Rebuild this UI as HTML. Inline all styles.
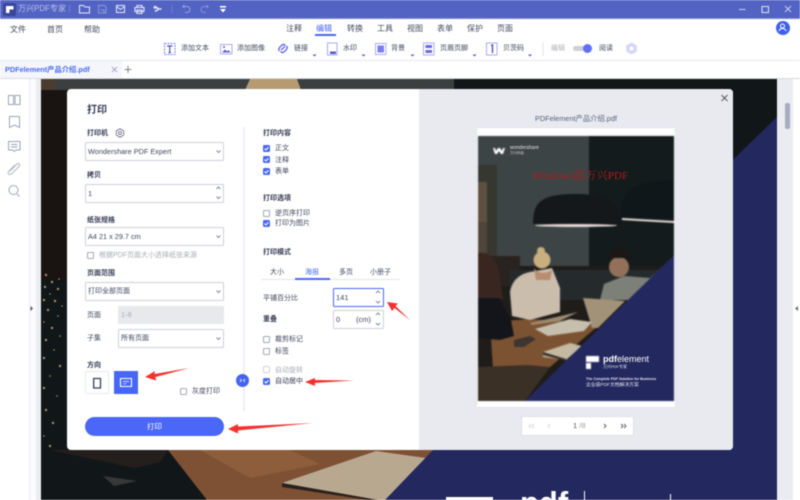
<!DOCTYPE html>
<html lang="zh"><head><meta charset="utf-8"><title>万兴PDF专家</title>
<style>
html,body{margin:0;padding:0;width:800px;height:500px;overflow:hidden;background:#fff}
#r{position:relative;width:800px;height:500px;overflow:hidden;font-family:"Liberation Sans","Noto Sans CJK SC",sans-serif;color:#41465c;filter:blur(.4px)}
#r div,#r svg{position:absolute}
.t{position:absolute;white-space:nowrap;line-height:10px;font-size:7px}
.m{font-size:8px;color:#444a5e}
.b{font-weight:700;color:#353b52}
.g{color:#a9acb6}
.box{background:#fff;border:1px solid #cfd0dc;border-radius:1.5px;box-sizing:border-box}
.c{width:7px;height:7px;border:1px solid #a5a7b3;border-radius:1.5px;box-sizing:border-box;background:#fff}
.k{width:7px;height:7px;border-radius:1.5px;background:#4766f5}
</style></head><body><div id="r">

<!-- title bar -->
<div style="left:0;top:0;width:800px;height:18px;background:#5363c4"></div>
<div style="left:0;top:18px;width:800px;height:1px;background:#7c89d6"></div>
<div style="left:3px;top:3px;width:13px;height:13px;background:#3a4799;border-radius:2px"></div>
<svg style="left:0;top:0" width="800" height="19" viewBox="0 0 800 19" fill="none" stroke="#e6e9f8" stroke-width="1">
<path d="M6 6h7.500v3.500h-4v3.500h-3.500z" fill="#fff" stroke="none"/>
<path d="M69.500 5v8" stroke="#6f7dd0"/>
<path d="M79.500 5.500h4l1.500 1.500h4.500v6h-10z"/>
<path d="M98.500 5.500h6l1.500 1.500v6h-7.500zM100.500 10h3.500v3" opacity=".4"/>
<path d="M116.500 5.500h8v7h-8zM116.500 6.500l4 3 4-3"/>
<path d="M137 7V5.500h5V7M135 7.500h9v4h-9zM137 10h5v3.500h-5z" stroke-width="1.100"/>
<path d="M155 6.500l4 2.500-4 2.500M155 6.500a.8.800 0 1 0 .1 0M160 9h1.500" stroke-width="1.500"/>
<path d="M172 5v8" stroke="#6f7dd0"/>
<path d="M183 6.500h4a3 3 0 0 1 0 6h-2M184.500 5l-1.700 1.500 1.700 1.500" opacity=".45"/>
<path d="M208 6.500h-4a3 3 0 0 0 0 6h2M206.500 5l1.700 1.500-1.700 1.500" opacity=".35"/>
<path d="M220 6h6v1.500h-6z" fill="#fff" stroke="none"/><path d="M220 9h6l-3 3.500z" fill="#fff" stroke="none"/>
<path d="M739 9.500h6.500" stroke="#c9cfee"/>
<path d="M762 6.500h6.500v6h-6.500z" stroke="#dfe3f6"/>
<path d="M785 6l6 6M791 6l-6 6" stroke="#c9cfee"/>
</svg>
<div class="t" style="left:18px;top:4px;font-size:8px;color:#bcc3ea">万兴PDF专家</div>

<!-- menu -->
<div class="t m" style="left:10px;top:25px">文件</div>
<div class="t m" style="left:47px;top:25px">首页</div>
<div class="t m" style="left:84px;top:25px">帮助</div>
<div class="t m" style="left:286px;top:24px">注释</div>
<div class="t m" style="left:316px;top:24px;color:#4766f5">编辑</div>
<div style="left:315px;top:34px;width:21px;height:1.500px;background:#4766f5"></div>
<div class="t m" style="left:347px;top:24px">转换</div>
<div class="t m" style="left:377px;top:24px">工具</div>
<div class="t m" style="left:407px;top:24px">视图</div>
<div class="t m" style="left:437px;top:24px">表单</div>
<div class="t m" style="left:467px;top:24px">保护</div>
<div class="t m" style="left:497px;top:24px">页面</div>
<div style="left:775.500px;top:20.500px;width:14px;height:14px;border-radius:50%;background:#3d60f0"></div>
<svg style="left:775px;top:20px" width="15" height="15" fill="none" stroke="#fff" stroke-width="1"><circle cx="7.500" cy="6" r="2"/><path d="M4 11c.5-2 2-2.500 3.500-2.500S10.500 9 11 11"/></svg>

<!-- toolbar -->
<svg style="left:0;top:40px" width="800" height="20" fill="none" stroke="#7c7ff0" stroke-width="1">
<path d="M164.500 3.500h10.500v11h-10.500z" stroke-dasharray="2 1"/>
<path d="M167 6h5.500M169.700 6v6.500M168.500 12.500h2.500" stroke="#5358b0" stroke-width="1.200"/>
<path d="M220.500 4.500h11.500v9.500h-11.500z" stroke="#a9aaf5"/>
<path d="M222 12.500l3-3 2 2 1.500-1.500 2 2.500z" fill="#5558c8" stroke="none"/><circle cx="224" cy="7" r="1" fill="#5558c8" stroke="none"/>
<path d="M279.500 11c-2-2 .5-4 2-5.500 1.500-1.500 3-1 4 0M286.500 6c2 2-.5 4-2 5.500-1.500 1.500-3 1-4 0M281 10l4-3.500" stroke="#5f63ea" stroke-width="1.300"/>
<path d="M327.500 3h9.500v12h-9.500z" stroke="#a9aaf5"/><path d="M330 11.500h6v2.500h-6z" fill="#5558c8" stroke="none"/>
<path d="M375.500 3.500h10.500v11h-10.500z" stroke="#a9aaf5"/><path d="M377.500 5.500h6.500v7h-6.500z" fill="#7a7cf2" stroke="none"/>
<path d="M423.500 3h10.500v12h-10.500z" stroke="#a9aaf5"/><path d="M425.500 5h6.500v3h-6.500zM425.500 10h6.500v3h-6.500z" fill="#6a6de0" stroke="none"/>
<path d="M486.500 3h10.500v12h-10.500z" stroke="#a9aaf5"/><path d="M491 5.500l1.500-.5v8" stroke="#4c50c0" stroke-width="1.400"/>
<path d="M312.500 14.500h4l-2 2z M361.500 14.500h4l-2 2zM410.500 14.500h4l-2 2zM472.500 14.500h4l-2 2zM528 14.500h4l-2 2z" fill="#5558c8" stroke="none"/>
<path d="M543 2v14" stroke="#e3e4ea"/>
</svg>
<div class="t" style="left:181px;top:44px">添加文本</div>
<div class="t" style="left:237px;top:44px">添加图像</div>
<div class="t" style="left:294px;top:44px">链接</div>
<div class="t" style="left:343px;top:44px">水印</div>
<div class="t" style="left:391px;top:44px">背景</div>
<div class="t" style="left:440px;top:44px">页眉页脚</div>
<div class="t" style="left:503px;top:44px">贝茨码</div>
<div class="t" style="left:551px;top:44px;color:#b0b2ba">编辑</div>
<div style="left:573px;top:46px;width:14px;height:5px;border-radius:3px;background:#cfd0d6"></div>
<div style="left:582.500px;top:44px;width:9px;height:9px;border-radius:50%;background:#5f70f5"></div>
<div class="t" style="left:599px;top:44px">阅读</div>
<svg style="left:625px;top:42px" width="13" height="13"><path d="M6.500.5l5.300 3v6l-5.300 3-5.300-3v-6z" fill="#d5d6fa"/><circle cx="6.500" cy="6.500" r="2" fill="#fff"/></svg>
<div style="left:0;top:60px;width:800px;height:1px;background:#e6e7ec"></div>

<!-- tabs -->
<div style="left:0;top:61px;width:122px;height:17px;background:#f5f6fb"></div>
<div class="t" style="left:5px;top:65px;font-size:7.300px;font-weight:700;color:#4a6cf0">PDFelement产品介绍.pdf</div>
<svg style="left:110px;top:63px" width="26" height="13" fill="none" stroke="#8a93bb" stroke-width=".8"><path d="M2 4l5 5M7 4l-5 5"/><path d="M18 3v7M14.500 6.500h7" stroke="#666"/></svg>
<div style="left:0;top:78px;width:800px;height:1px;background:#d9dae0"></div>

<!-- sidebar -->
<div style="left:0;top:79px;width:29px;height:421px;background:#fff"></div>
<div style="left:29px;top:79px;width:1px;height:421px;background:#e9eaef"></div>
<div style="left:30px;top:79px;width:6px;height:421px;background:#fcfcfe"></div>
<div style="left:36px;top:79px;width:5px;height:421px;background:#ecedf2"></div>
<svg style="left:0;top:79px" width="40" height="240" fill="none" stroke="#9ea3b5" stroke-width="1">
<path d="M8.500 16.500h5v9h-5zM15 16.500h5v9h-5z"/>
<path d="M9.500 37.500h10v11l-5-2.500-5 2.500z"/>
<path d="M8.500 62.500h11.500v8.500h-4l-1.700 1.500-1.700-1.500h-4zM11 65.500h6.500M11 68h6.500"/>
<path d="M10 92c3-3 5-5 7-7 2-1.500 3.500 1 2 2.500l-7 7c-3 2.500-5-.5-3-2.500l6-6" stroke="#b0b4c3"/>
<circle cx="13.500" cy="111" r="4.500"/><path d="M17 115l2.500 2.500"/>
<path d="M30.500 227v5l2.500-2.500z" fill="#555" stroke="none"/>
</svg>

<!-- document background -->
<svg style="left:41px;top:79px" width="736" height="421" viewBox="41 79 736 421">
<rect x="41" y="79" width="736" height="421" fill="#111719"/>
<rect x="41" y="79" width="413" height="11" fill="#3b3f3f"/>
<rect x="41" y="79" width="14" height="11" fill="#4a3d30"/>
<path d="M250 79h47l4 11h-56z" fill="#b69a72"/>
<rect x="41" y="90" width="30" height="190" fill="#191411"/>
<g fill="#a88e68">
<circle cx="46" cy="275" r="1.200"/><circle cx="52" cy="282" r="1.200"/><circle cx="59" cy="279" r=".8"/><circle cx="45" cy="287" r="1.200"/><circle cx="58" cy="289" r="1.200"/><circle cx="50" cy="294" r=".8"/><circle cx="44" cy="300" r="1.200"/><circle cx="55" cy="301" r="1.200"/><circle cx="62" cy="306" r=".8"/><circle cx="48" cy="310" r="1.200"/><circle cx="58" cy="316" r=".8"/><circle cx="44" cy="322" r=".8"/><circle cx="52" cy="328" r="1.200"/><circle cx="60" cy="336" r=".8"/><circle cx="46" cy="340" r="1.200"/><circle cx="54" cy="350" r=".8"/><circle cx="44" cy="358" r="1.200"/><circle cx="60" cy="366" r="1.200"/><circle cx="50" cy="376" r=".8"/><circle cx="44" cy="388" r="1.200"/><circle cx="57" cy="396" r=".8"/><circle cx="46" cy="410" r="1.200"/><circle cx="53" cy="423" r="1.200"/><circle cx="44" cy="436" r=".8"/><circle cx="50" cy="446" r="1.200"/>
</g>
<path d="M168 450h270l-48 50h-183z" fill="#7f5134"/>
<path d="M200 450h90l30 14-70 14z" fill="#94623f" opacity=".7"/>
<path d="M50 450h118l-8 12-25 6z" fill="#241f1c"/>
<path d="M103 476l34 5-23 5z" fill="#383838"/>
<path d="M282 483l94-32 57 8-41 41h-14z" fill="#b9a890"/>
<path d="M282 483l96 17h-10l-86-13z" fill="#28221d"/>
<path d="M777 117v383h-392l48-50z" fill="#23285f"/>
<rect x="446" y="497" width="47" height="5" fill="#fff"/>
<rect x="584" y="491" width="1" height="10" fill="#fff"/>
<rect x="670" y="494" width="1" height="7" fill="#fff"/>
</svg>
<div class="t" style="left:520px;top:486px;font-size:31px;line-height:34px;color:#fff;font-weight:700">pdf</div>

<!-- scroll area -->
<div style="left:777px;top:79px;width:16px;height:421px;background:#ebecf1"></div>
<div style="left:793px;top:79px;width:7px;height:421px;background:#fff"></div>
<div style="left:785px;top:103px;width:5px;height:26px;border-radius:2px;background:#a8acc0"></div>
<svg style="left:793px;top:304px" width="7" height="10"><path d="M5 2v5L2 4.500z" fill="#666b7c"/></svg>

<!-- modal -->
<div style="left:67px;top:89px;width:666px;height:361px;background:#fff;border-radius:4px;overflow:hidden"></div>
<div style="left:419px;top:89px;width:314px;height:361px;background:#e9eaf0;border-radius:0 4px 4px 0"></div>
<div class="t b" style="left:87px;top:105px;font-size:10px;line-height:12px">打印</div>

<div class="t b" style="left:87px;top:129px">打印机</div>
<svg style="left:115px;top:128px" width="10" height="10" fill="none" stroke="#6c7186" stroke-width=".9"><path d="M5 .8l3.700 2.100v4.200L5 9.200 1.300 7.100V2.900z"/><circle cx="5" cy="5" r="1.400"/></svg>
<div class="box" style="left:85px;top:142px;width:139px;height:19px"></div>
<div class="t" style="left:88px;top:147px;font-size:7.300px">Wondershare PDF Expert</div>

<div class="t b" style="left:87px;top:171px">拷贝</div>
<div class="box" style="left:85px;top:184px;width:139px;height:19px"></div>
<div class="t" style="left:88px;top:189px;font-size:7.500px">1</div>

<div class="t b" style="left:87px;top:216px">纸张规格</div>
<div class="box" style="left:85px;top:227px;width:139px;height:19px"></div>
<div class="t" style="left:88px;top:232px;font-size:7.300px">A4 21 x 29.7 cm</div>
<div class="c" style="left:87px;top:252px"></div>
<div class="t g" style="left:99px;top:251px">根据PDF页面大小选择纸张来源</div>

<div class="t b" style="left:87px;top:269px">页面范围</div>
<div class="box" style="left:85px;top:282px;width:139px;height:19px"></div>
<div class="t" style="left:88px;top:287px">打印全部页面</div>
<div class="t" style="left:87px;top:311px">页面</div>
<div style="left:118px;top:306px;width:106px;height:18px;background:#e8e9ec"></div>
<div class="t g" style="left:121px;top:310px;font-size:7.500px">1-8</div>
<div class="t" style="left:87px;top:334px">子集</div>
<div class="box" style="left:118px;top:329px;width:106px;height:18.500px"></div>
<div class="t" style="left:121px;top:334px">所有页面</div>

<div class="t b" style="left:87px;top:361px">方向</div>
<div class="box" style="left:85px;top:371px;width:24px;height:23px;border-color:#e9eaef"></div>
<svg style="left:85px;top:371px" width="24" height="23" fill="none"><path d="M8.700 7.500h6.800v9.500h-6.800z" stroke="#3a3f58" stroke-width="1.300"/></svg>
<div style="left:114px;top:371px;width:23.500px;height:23px;background:#4766f5"></div>
<svg style="left:114px;top:371px" width="24" height="23" fill="none" stroke="#fff"><path d="M6.500 7.500h11v8h-11z" stroke-width="1.100"/><path d="M9 10.500h6M9 12.800h3.500" stroke-width=".7"/></svg>
<div class="c" style="left:180px;top:388px"></div>
<div class="t" style="left:192px;top:387px">灰度打印</div>

<div style="left:85px;top:417px;width:139px;height:19px;border-radius:10px;background:#4a67f7"></div>
<div class="t" style="left:147px;top:422px;color:#fff;font-size:7.500px">打印</div>

<div style="left:243px;top:127px;width:1.500px;height:284px;background:#eeeff3"></div>
<div style="left:236px;top:374px;width:13px;height:13px;border-radius:50%;background:#4563ee"></div>
<svg style="left:236px;top:374px" width="13" height="13" fill="none" stroke="#fff" stroke-width=".8"><path d="M4 5l1.500 1.500L4 8M9 5L7.500 6.500 9 8"/></svg>

<div class="t b" style="left:263px;top:129px">打印内容</div>
<div class="k" style="left:263px;top:145px"></div><div class="t" style="left:275px;top:144px">正文</div>
<div class="k" style="left:263px;top:156px"></div><div class="t" style="left:275px;top:156px">注释</div>
<div class="k" style="left:263px;top:168px"></div><div class="t" style="left:275px;top:167px">表单</div>
<div class="t b" style="left:263px;top:194px">打印选项</div>
<div class="c" style="left:263px;top:210px"></div><div class="t" style="left:275px;top:209px">逆页序打印</div>
<div class="k" style="left:263px;top:220px"></div><div class="t" style="left:275px;top:219px">打印为图片</div>
<div class="t b" style="left:263px;top:248px">打印模式</div>

<div class="t" style="left:270px;top:268px">大小</div>
<div class="t" style="left:305px;top:268px;color:#4a6cf0">海报</div>
<div class="t" style="left:339px;top:268px">多页</div>
<div class="t" style="left:370px;top:268px">小册子</div>
<div style="left:261px;top:279px;width:139px;height:1px;background:#e4e5ea"></div>
<div style="left:295px;top:278px;width:35px;height:1.500px;background:#4a6cf0"></div>

<div class="t" style="left:263px;top:294px">平铺百分比</div>
<div class="box" style="left:333px;top:288px;width:51px;height:18.500px;border-color:#4766f5"></div>
<div class="t" style="left:336px;top:293px;font-size:7.500px">141</div>
<div class="t b" style="left:263px;top:315px">重叠</div>
<div class="box" style="left:333px;top:310px;width:51px;height:18.500px"></div>
<div class="t" style="left:336px;top:315px;font-size:7.500px">0</div>
<div class="t" style="left:356px;top:315px;font-size:7.500px">(cm)</div>

<div class="c" style="left:263px;top:336px"></div><div class="t" style="left:275px;top:335px">裁剪标记</div>
<div class="c" style="left:263px;top:348px"></div><div class="t" style="left:275px;top:347px">标签</div>
<div class="c" style="left:263px;top:366px;border-color:#d5d6dc"></div><div class="t g" style="left:275px;top:366px">自动旋转</div>
<div class="k" style="left:263px;top:378px"></div><div class="t" style="left:275px;top:377px;color:#333850">自动居中</div>

<!-- chevrons + checks -->
<svg style="left:0;top:0" width="420" height="400" fill="none" stroke="#666b80" stroke-width=".8">
<path d="M216.500 150.500l2 2 2-2M216.500 235.500l2 2 2-2M216.500 290.500l2 2 2-2M216.500 337.500l2 2 2-2"/>
<path d="M216.500 189l2-2 2 2M216.500 196.500l2 2 2-2"/>
<path d="M376 293l2-2 2 2M376 301l2 2 2-2M376 315l2-2 2 2M376 323l2 2 2-2"/>
<g stroke="#fff" stroke-width="1.100"><path d="M264.500 148.500l1.500 1.500 2.500-2.800M264.500 159.500l1.500 1.500 2.500-2.800M264.500 171.500l1.500 1.500 2.500-2.800M264.500 223.500l1.500 1.500 2.500-2.800M264.500 381.500l1.500 1.500 2.500-2.800"/></g>
</svg>

<!-- preview -->
<svg style="left:0;top:0" width="800" height="500" fill="none" stroke="#555" stroke-width=".9"><path d="M721.500 95l6 6M727.500 95l-6 6"/></svg>
<div class="t" style="left:535px;top:114px;font-size:7.300px;color:#565c7c">PDFelement产品介绍.pdf</div>
<div style="left:477px;top:128px;width:198px;height:279px;background:#fff;box-shadow:0 0 1px #c9cad2"></div>
<svg style="left:478px;top:136px;filter:blur(.5px)" width="196" height="265" viewBox="478 136 196 265">
<rect x="478" y="136" width="196" height="265" fill="#131b1c"/>
<rect x="478" y="136" width="111" height="130" fill="#3d4445"/>
<rect x="478" y="165" width="19" height="100" fill="#36372f"/>
<rect x="478" y="182" width="9" height="40" fill="#5d5040"/><rect x="478" y="222" width="9" height="34" fill="#4f4538"/>
<path d="M533 224c0-22 8-30 43-30s44 10 44 30z" fill="#15181a"/>
<ellipse cx="576" cy="225.500" rx="41" ry="1.500" fill="#e4dad8"/>
<path d="M620 218c0-24 8-37 54-38v38z" fill="#10171a"/>
<path d="M622 218l52 3v2l-52-3z" fill="#e6dcd8"/>
<rect x="478" y="266" width="196" height="135" fill="#1f1c1a"/>
<rect x="478" y="256" width="42" height="30" fill="#29231f"/>
<rect x="510" y="270" width="164" height="30" fill="#252b2d"/>
<path d="M490 322l40-3 60 4 15-3-55 47-25 14-32-12z" fill="#7c5332"/>
<path d="M478 367l50-2 22 2-25 34h-47z" fill="#3a3025"/>
<path d="M478 253c14-2 20 8 22 26l3 20h-25z" fill="#3a2620"/>
<path d="M478 298h21l12 22 3 16-14 4-22-2z" fill="#14151b"/>
<path d="M510 292c2-12 10-18 20-20l22-4 8 20 0 24-30 8-18-4z" fill="#cbbdac"/>
<path d="M534 268c4 6 12 6 18 2l-2 10h-14z" fill="#b88d70"/>
<circle cx="542" cy="260" r="8.500" fill="#c9ae80"/><circle cx="541" cy="251" r="4" fill="#c9ae80"/>
<path d="M600 300l4-16 20-8 26 2 24-22v12l-42 32z" fill="#7d7f79"/>
<circle cx="619" cy="267" r="10" fill="#93705a"/><path d="M608 262c0-10 8-14 13-14s11 4 11 12l-4-2-16 0z" fill="#1b1715"/>
<path d="M583 298l42 3-27 27-6 0z" fill="#a29378"/>
<path d="M530 323l48-11-18 9-28 4z" fill="#9c8a6e"/>
<path d="M535 329l35-10 22 3-8 9-36 5z" fill="#c7bfae"/>
<path d="M543 352l27-9 12 3-16 14-23-3z" fill="#c5b9a1"/>
<path d="M543 352l23 7v2l-23-6z" fill="#3a3026"/>
<path d="M514 340l16-4 6 3-12 8h-10z" fill="#3c3530"/>
<path d="M674 255v146h-149z" fill="#23285f"/>
<path d="M493 148l2 6h2l2-3 2 3h2l2-6h-2l-1 3-2-3h-2l-2 3-1-3z" fill="#fff"/>
<rect x="586" y="356" width="13" height="6" fill="#fff"/><rect x="586" y="363" width="5" height="6" fill="#fff"/>
</svg>
<div class="t" style="left:510px;top:143px;font-size:5px;color:#dfe0e0">wondershare</div>
<div class="t" style="left:510px;top:148px;font-size:3.500px;color:#cfd0d0">万兴科技</div>
<div class="t" style="left:532px;top:171px;font-family:'Liberation Serif','Noto Serif CJK SC',serif;font-size:11px;color:#b01c20;letter-spacing:.1px">Windows版万兴PDF</div>
<div class="t" style="left:603px;top:354px;font-size:9px;color:#fff"><b>pdf</b>element</div>
<div class="t" style="left:603px;top:362px;font-size:4px;color:#e6e7f0">万兴PDF专家</div>
<div class="t" style="left:586px;top:374px;font-size:3.600px;color:#e6e7f0;font-weight:700">The Complete PDF Solution for Business</div>
<div class="t" style="left:586px;top:381px;font-size:4.800px;color:#e6e7f0">企业级PDF文档解决方案</div>

<!-- pager -->
<div style="left:521px;top:416px;width:113px;height:20px;background:#fff;border:1px solid #dfe0e8;border-radius:2px;box-sizing:border-box"></div>
<svg style="left:521px;top:416px" width="113" height="20" fill="none" stroke-width=".9">
<path d="M10 8l-2 2 2 2M13 8l-2 2 2 2M29 8l-2 2 2 2" stroke="#d5d6dc"/>
<path d="M83 8l2 2-2 2M100 8l2 2-2 2M103 8l2 2-2 2" stroke="#555a70"/>
</svg>
<div class="t" style="left:573px;top:421px;font-size:7.500px;color:#9a9da8"><span style="color:#555">1</span> /8</div>

<!-- red arrows -->
<svg style="left:0;top:0" width="800" height="500" fill="#f4312e">
<path d="M387 302l11 1.500-2.500 2.500 15 14.500-16-12.500-2.500 3z"/>
<path d="M145 377l10-6-.5 3 35-6-34 9 .5 3.500z"/>
<path d="M305 382l10-4v2l39 .5-39 2.500v3z"/>
<path d="M228 429l10-5 0 2.500 75-3.500-75 7.500 0 3z"/>
</svg>
</div></body></html>
